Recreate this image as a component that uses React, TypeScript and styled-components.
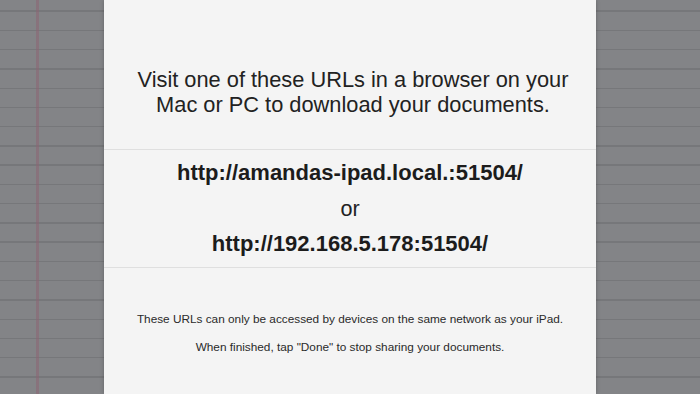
import React from "react";
import styled, { createGlobalStyle } from "styled-components";

const Global = createGlobalStyle`
  html, body { margin: 0; padding: 0; }
  body {
    width: 700px;
    height: 394px;
    overflow: hidden;
    font-family: "Liberation Sans", Arial, sans-serif;
  }
`;

const Paper = styled.div`
  width: 700px;
  height: 394px;
  display: flex;
  justify-content: center;
  background-color: #838487;
  background-image:
    linear-gradient(to right, transparent 36px, rgba(140, 100, 115, 0.55) 36px, rgba(140, 100, 115, 0.55) 39px, transparent 39px),
    repeating-linear-gradient(to bottom, transparent 0px, transparent 10.5px, #76777a 10.5px, #76777a 11.8px, transparent 11.8px, transparent 19.25px);
`;

const Sheet = styled.div`
  width: 492px;
  height: 394px;
  background: #f4f4f4;
  box-shadow: 0 0 4px rgba(0, 0, 0, 0.25);
  display: flex;
  flex-direction: column;
  color: #1e1e1e;
`;

const Section = styled.div<{ $h?: number; $pt: number; $pl?: number }>`
  height: ${(p) => (p.$h ? `${p.$h}px` : "auto")};
  flex: ${(p) => (p.$h ? "0 0 auto" : "1 1 auto")};
  padding-top: ${(p) => p.$pt}px;
  padding-left: ${(p) => p.$pl ?? 0}px;
  box-sizing: border-box;
  display: flex;
  flex-direction: column;
  align-items: center;
  text-align: center;
  white-space: nowrap;
`;

const Divider = styled.div`
  height: 1px;
  background: #dfdfdf;
  flex: 0 0 auto;
`;

const Lead = styled.p`
  margin: 0;
  font-size: 21.8px;
  line-height: 25px;
  color: #222;
`;

const Url = styled.div`
  font-size: 22px;
  font-weight: bold;
  line-height: 35.5px;
  color: #1c1c1c;
`;

const Or = styled.div`
  font-size: 21.6px;
  line-height: 35.5px;
  color: #222;
`;

const Note = styled.p`
  margin: 0;
  font-size: 11.8px;
  line-height: 27.7px;
  color: #2a2a2a;
`;

export default function App() {
  return (
    <>
      <Global />
      <Paper>
        <Sheet>
          <Section $h={149} $pt={67} $pl={6}>
            <Lead>
              Visit one of these URLs in a browser on your
              <br />
              Mac or PC to download your documents.
            </Lead>
          </Section>
          <Divider />
          <Section $h={117} $pt={5}>
            <Url>http://amandas-ipad.local.:51504/</Url>
            <Or>or</Or>
            <Url>http://192.168.5.178:51504/</Url>
          </Section>
          <Divider />
          <Section $pt={38}>
            <Note>These URLs can only be accessed by devices on the same network as your iPad.</Note>
            <Note>When finished, tap "Done" to stop sharing your documents.</Note>
          </Section>
        </Sheet>
      </Paper>
    </>
  );
}
